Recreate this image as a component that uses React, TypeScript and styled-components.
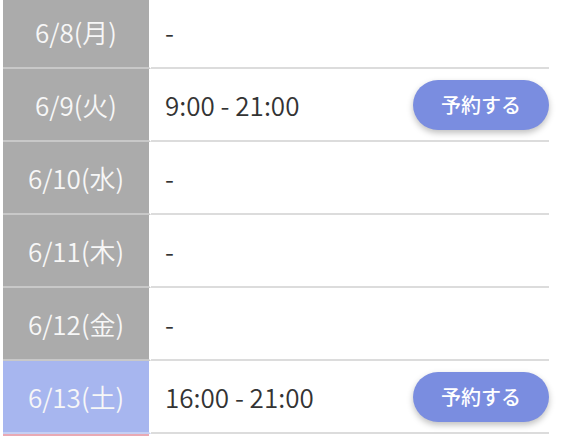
import React from "react";
import styled, { createGlobalStyle } from "styled-components";

const Global = createGlobalStyle`
  html, body { margin: 0; padding: 0; background: #fff; overflow: hidden; }
  body { font-family: "Noto Sans CJK JP", "Noto Sans", sans-serif; }
`;

const Table = styled.div`
  margin: -4px 0 0 3px;
  width: 546px;
  display: flex;
  flex-direction: column;
`;

const Row = styled.div`
  display: grid;
  grid-template-columns: 148px 1fr;
  height: 73px;
`;

type Kind = "weekday" | "sat" | "sun";

const bg: Record<Kind, string> = {
  weekday: "#ababab",
  sat: "#a7b6ef",
  sun: "#e9a9b4",
};

const DateCell = styled.div<{ $kind: Kind }>`
  background: ${(p) => bg[p.$kind]};
  border-right: 2px solid #fff;
  border-bottom: 2px solid rgba(255, 255, 255, 0.35);
  color: #f7f7f7;
  font-size: 26px;
  font-weight: 350;
  display: flex;
  align-items: center;
  justify-content: center;
`;

const Content = styled.div`
  border-bottom: 2px solid #dcdcdc;
  display: flex;
  align-items: center;
  justify-content: space-between;
  padding-left: 14px;
  color: #333;
  font-size: 26px;
  font-weight: 350;
`;

const Button = styled.button`
  width: 136px;
  height: 50px;
  border: none;
  border-radius: 25px;
  background: #7a8de0;
  color: #fff;
  font-family: "Noto Sans CJK JP", sans-serif;
  font-size: 20px;
  font-weight: 500;
  box-shadow: 0 3px 6px rgba(0, 0, 0, 0.25);
  cursor: pointer;
`;

const rows: { date: string; kind: Kind; time: string }[] = [
  { date: "6/8(月)", kind: "weekday", time: "-" },
  { date: "6/9(火)", kind: "weekday", time: "9:00 - 21:00" },
  { date: "6/10(水)", kind: "weekday", time: "-" },
  { date: "6/11(木)", kind: "weekday", time: "-" },
  { date: "6/12(金)", kind: "weekday", time: "-" },
  { date: "6/13(土)", kind: "sat", time: "16:00 - 21:00" },
  { date: "", kind: "sun", time: "" },
];

export default function App() {
  return (
    <>
      <Global />
      <Table>
        {rows.map((r, i) => (
          <Row key={i}>
            <DateCell $kind={r.kind}>{r.date}</DateCell>
            <Content>
              <span>{r.time}</span>
              {r.time && r.time !== "-" && <Button>予約する</Button>}
            </Content>
          </Row>
        ))}
      </Table>
    </>
  );
}
